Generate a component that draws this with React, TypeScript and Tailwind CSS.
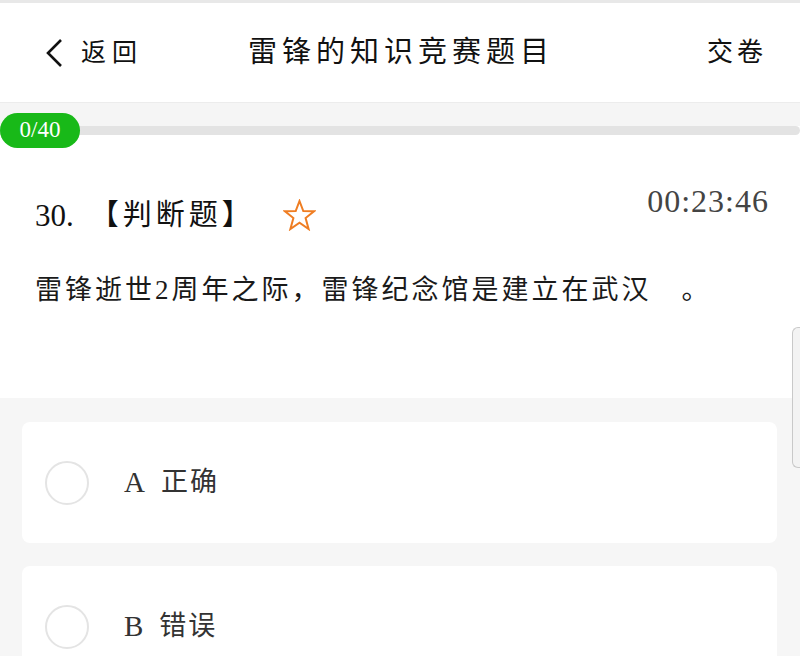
const serif = "font-['Liberation_Serif','Noto_Sans_CJK_SC',serif]";

function Header() {
  return (
    <div className="h-[100px] bg-white border-b border-[#ececec] flex items-center justify-between px-[35px] relative">
      <div className="flex items-center">
        <svg width="20" height="30" viewBox="0 0 20 30" className="ml-[10px]">
          <polyline points="16,2 3,15 16,28" fill="none" stroke="#111" strokeWidth="2.6" />
        </svg>
        <span className="ml-[16px] text-[25px] tracking-[6px] text-[#111]">返回</span>
      </div>
      <div className="absolute left-0 right-0 text-center text-[29px] tracking-[5px] text-[#111] pointer-events-none pl-[2px]">
        雷锋的知识竞赛题目
      </div>
      <span className="text-[26px] tracking-[4px] text-[#111] -mr-[2px]">交卷</span>
    </div>
  );
}

function Progress() {
  return (
    <div className="bg-white">
      <div className="h-[23px] bg-[#f5f5f5]" />
      <div className="relative h-[9px] bg-[#e3e3e3] rounded-r-full">
        <div className="absolute left-0 top-[-13px] w-[80px] h-[35px] rounded-full bg-[#18b918] flex items-center justify-center text-white text-[23px]">
          0/40
        </div>
      </div>
    </div>
  );
}

function StarIcon() {
  return (
    <svg width="33" height="32" viewBox="0 0 33 32">
      <polygon
        points="16.5,2 20.3,12 31,12.3 22.6,19 25.6,30 16.5,23.6 7.4,30 10.4,19 2,12.3 12.7,12"
        fill="none"
        stroke="#ef7d22"
        strokeWidth="2"
        strokeLinejoin="miter"
      />
    </svg>
  );
}

function Question() {
  return (
    <div className="bg-white h-[263px] px-[35px] pt-[50px]">
      <div className="flex justify-between items-start">
        <div className="flex items-center mt-[14px]">
          <span className="text-[31px] leading-none text-[#111]">30.</span>
          <span className="ml-[16px] text-[29px] leading-none tracking-[4px] text-[#111]">【判断题】</span>
          <span className="ml-[28px]">
            <StarIcon />
          </span>
        </div>
        <span className="text-[32px] leading-none tracking-[1px] text-[#444] -mr-[4px]">00:23:46</span>
      </div>
      <p className="mt-[46px] text-[27px] leading-none tracking-[3px] text-[#1a1a1a]">
        雷锋逝世2周年之际，雷锋纪念馆是建立在武汉　。
      </p>
    </div>
  );
}

function Option({ letter, text }: { letter: string; text: string }) {
  return (
    <div className="h-[121px] bg-white rounded-lg flex items-center pl-[23px]">
      <div className="w-[44px] h-[44px] rounded-full border-2 border-[#e4e4e4]" />
      <span className="ml-[35px] text-[29px] leading-none text-[#333]">{letter}</span>
      <span className="ml-[16px] text-[27px] leading-none tracking-[2px] text-[#333]">{text}</span>
    </div>
  );
}

export default function App() {
  return (
    <div className={`w-[800px] h-[656px] overflow-hidden relative bg-[#f6f6f6] ${serif}`}>
      <div className="h-[3px] bg-[#e8e8e8]" />
      <Header />
      <Progress />
      <Question />
      <div className="px-[22px] pt-[24px] pr-[23px] flex flex-col gap-[23px]">
        <Option letter="A" text="正确" />
        <Option letter="B" text="错误" />
      </div>
      <div className="absolute right-0 top-[327px] w-[8px] h-[141px] rounded-l-md border border-r-0 border-[#c9c9c9] bg-[#f3f3f3]" />
    </div>
  );
}
